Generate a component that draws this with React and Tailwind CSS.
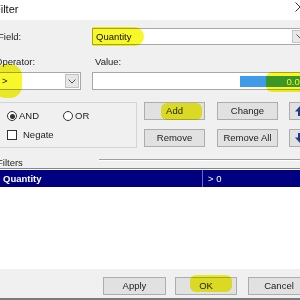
import React from "react";

function Chevron({ className = "" }) {
  return (
    <svg width="8" height="5" viewBox="0 0 8 5" className={className}>
      <polyline points="0.5,0.5 4,4 7.5,0.5" fill="none" stroke="#555" strokeWidth="1" />
    </svg>
  );
}

function Btn({ w, children, extra = "" }) {
  return (
    <div
      className={`h-[18px] ${w} ${extra} shrink-0 flex items-center justify-center bg-[#e1e1e1] border border-[#adadad] text-[#222]`}
    >
      {children}
    </div>
  );
}

export default function App() {
  return (
    <div className="w-[300px] h-[300px] overflow-hidden relative bg-[#f0f0f0] text-[9.5px] leading-none text-[#222] font-['Liberation_Sans',Arial,sans-serif]">
      <div className="ml-[-6px] w-[320px] flex flex-col">
        {/* title bar */}
        <div className="h-[20px] bg-white flex items-center">
          <span className="text-[11px] text-[#111] mt-[-2px]">Filter</span>
          <div className="flex-1" />
          <svg width="12" height="12" viewBox="0 0 12 12" className="mr-[8px] mt-[-6px]">
            <path d="M1.5 1.5 L10.5 10.5 M10.5 1.5 L1.5 10.5" stroke="#333" strokeWidth="1" />
          </svg>
        </div>

        {/* field row */}
        <div className="mt-[8px] h-[17px] flex items-center">
          <div className="w-[98px] shrink-0 pl-[4px]">Field:</div>
          <div className="flex-1 mr-[4px] h-[17px] bg-white border border-[#a8a8a8] flex items-center">
            <span className="pl-[3px] flex-1 text-[#111]">Quantity</span>
            <div className="w-[16px] h-[13px] mr-[1px] bg-[#e8e8e8] border border-[#c4c4c4] flex items-center justify-center">
              <Chevron />
            </div>
          </div>
        </div>

        {/* labels */}
        <div className="mt-[10px] h-[14px] flex items-center">
          <div className="w-[101px] shrink-0 pl-[1px]">Operator:</div>
          <div>Value:</div>
        </div>

        {/* operator / value */}
        <div className="mt-[3px] h-[18px] flex">
          <div className="w-[87px] shrink-0 h-[18px] bg-white border border-[#a8a8a8] flex items-center">
            <span className="pl-[7px] flex-1 text-[#111]">&gt;</span>
            <div className="w-[14px] h-[14px] mr-[1px] bg-[#e6e6e6] border border-[#c0c0c0] flex items-center justify-center">
              <Chevron />
            </div>
          </div>
          <div className="ml-[11px] flex-1 mr-[4px] h-[18px] bg-white border border-[#a8a8a8] flex items-center justify-end pr-[3px]">
            <div className="w-[66px] h-[11px] mt-[1px] bg-[#3d9be9] flex items-center justify-end text-white pr-[1px]">
              0.00
            </div>
          </div>
        </div>

        {/* group + buttons */}
        <div className="mt-[12px] flex">
          <div className="w-[143px] h-[46px] shrink-0 border border-[#d5d5d5] pl-[12px] pt-[8px] flex flex-col">
            <div className="h-[10px] flex items-center">
              <div className="w-[56px] flex items-center">
                <div className="w-[10px] h-[10px] rounded-full border border-[#333] bg-white flex items-center justify-center">
                  <div className="w-[5px] h-[5px] rounded-full bg-[#333]" />
                </div>
                <span className="ml-[2px]">AND</span>
              </div>
              <div className="w-[10px] h-[10px] rounded-full border border-[#333] bg-white" />
              <span className="ml-[2px]">OR</span>
            </div>
            <div className="mt-[9px] h-[10px] flex items-center">
              <div className="w-[10px] h-[10px] border border-[#333] bg-white" />
              <span className="ml-[6px]">Negate</span>
            </div>
          </div>
          <div className="ml-[7px] flex flex-col gap-[9px]">
            <div className="flex">
              <Btn w="w-[61px]">Add</Btn>
              <Btn w="w-[61px]" extra="ml-[12px]">Change</Btn>
              <Btn w="w-[22px]" extra="ml-[11px]">
                <svg width="12" height="12" viewBox="0 0 12 12">
                  <path d="M6 1 L11 6.5 L8 6.5 L8 11 L4 11 L4 6.5 L1 6.5 Z" fill="#1f3c88" />
                </svg>
              </Btn>
            </div>
            <div className="flex">
              <Btn w="w-[61px]">Remove</Btn>
              <Btn w="w-[61px]" extra="ml-[12px]">Remove All</Btn>
              <Btn w="w-[22px]" extra="ml-[11px]">
                <svg width="12" height="12" viewBox="0 0 12 12">
                  <path d="M6 11 L11 5.5 L8 5.5 L8 1 L4 1 L4 5.5 L1 5.5 Z" fill="#1f3c88" />
                </svg>
              </Btn>
            </div>
          </div>
        </div>

        {/* filters label */}
        <div className="mt-[8px] h-[12px] flex items-start">
          <div className="w-[105px] shrink-0 pl-[3px] mt-[2px]">Filters</div>
          <div className="flex-1 mt-[3px] h-[2px] border-t border-[#a0a0a0] border-b border-b-white" />
        </div>

        {/* list */}
        <div className="h-[101px] bg-white border-t border-[#828790] pt-[1px]">
          <div className="h-[17px] bg-[#000080] flex text-white">
            <div className="w-[209px] shrink-0 pl-[9px] flex items-center font-bold border-r border-[#6a6ab8]">
              Quantity
            </div>
            <div className="pl-[5px] flex items-center">&gt; 0</div>
          </div>
        </div>

        {/* bottom buttons */}
        <div className="h-[29px] pt-[8px] flex">
          <Btn w="w-[63px]" extra="ml-[109px]">Apply</Btn>
          <Btn w="w-[62px]" extra="ml-[9px]">OK</Btn>
          <Btn w="w-[62px]" extra="ml-[11px]">Cancel</Btn>
        </div>
        <div className="h-[2px] bg-[#7a7a7a]" />
      </div>

      {/* marker highlights */}
      <div className="absolute left-[92px] top-[27px] w-[52px] h-[19px] rounded-l-[2px] rounded-r-[10px] bg-[#f7f72a] mix-blend-multiply" />
      <div className="absolute left-[-6px] top-[64px] w-[28px] h-[34px] rounded-[12px] bg-[#f7f72a] mix-blend-multiply" />
      <div className="absolute left-[266px] top-[72px] w-[40px] h-[20px] rounded-l-[6px] bg-[#f7f72a] mix-blend-multiply" />
      <div className="absolute left-[161px] top-[103px] w-[41px] h-[17px] rounded-[6px] bg-[#f7f72a] mix-blend-multiply" />
      <div className="absolute left-[190px] top-[275px] w-[42px] h-[17px] rounded-[6px] bg-[#f7f72a] mix-blend-multiply" />
    </div>
  );
}
